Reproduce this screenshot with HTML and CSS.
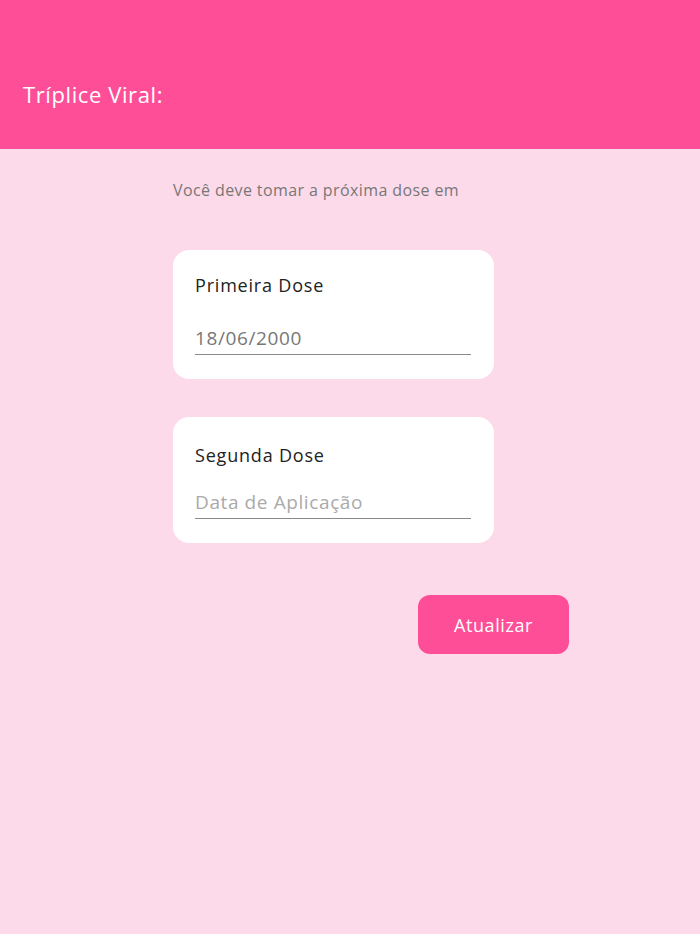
FILE: index.html
```html
<!DOCTYPE html>
<html>
	<head>
		<meta charset="utf-8">
		<title>Tríplice Viral</title>
		<link rel="stylesheet" href="styles.css">
	</head>
	<body>
		<header class="topo">
			<h1>Tríplice Viral:</h1>
		</header>
		<main class="conteudo">
			<p class="aviso">Você deve tomar a próxima dose em</p>
			<div class="cartao">
				<label for="dose1">Primeira Dose</label>
				<input id="dose1" type="text" value="18/06/2000">
			</div>
			<div class="cartao vazio">
				<label for="dose2">Segunda Dose</label>
				<input id="dose2" type="text" placeholder="Data de Aplicação">
			</div>
			<div class="acoes">
				<button class="btn">Atualizar</button>
			</div>
		</main>
	</body>
</html>
```

FILE: styles.css
```css
body, h1, p{
	margin: 0;
	padding: 0;
}
body{
	background: #fddaea;
	font-family: "Open Sans", "Liberation Sans", sans-serif;
	min-height: 934px;
}
.topo{
	height: 149px;
	background: #ff4e98;
	padding: 79px 23px 0;
	box-sizing: border-box;
}
.topo h1{
	font-size: 22px;
	line-height: 30px;
	letter-spacing: 0.6px;
	font-weight: normal;
	color: #fff;
}
.conteudo{
	width: 396px;
	margin-left: 173px;
	padding-top: 31px;
	display: flex;
	flex-direction: column;
}
.aviso{
	font-size: 16px;
	line-height: 20px;
	letter-spacing: 0.4px;
	color: #777;
	margin-bottom: 50px;
}
.cartao{
	width: 321px;
	box-sizing: border-box;
	background: #fff;
	border-radius: 16px;
	padding: 23px 23px 24px 22px;
	display: flex;
	flex-direction: column;
	margin-bottom: 38px;
}
.cartao label{
	font-size: 18px;
	line-height: 24px;
	letter-spacing: 0.8px;
	color: #222;
}
.cartao input{
	margin-top: 26px;
	height: 29px;
	padding: 0 0 2px;
	border: none;
	border-bottom: 1.5px solid #8a8a8a;
	outline: none;
	font-family: inherit;
	font-size: 19px;
	letter-spacing: 0.6px;
	color: #777;
	background: transparent;
}
.cartao input::placeholder{
	color: #aaa;
}
.vazio{
	padding-top: 26px;
}
.vazio input{
	margin-top: 20px;
}
.acoes{
	display: flex;
	justify-content: flex-end;
	margin-top: 14px;
}
.btn{
	width: 151px;
	height: 59px;
	border: none;
	border-radius: 12px;
	background: #ff4e98;
	color: #fff;
	font-family: inherit;
	font-size: 18px;
	letter-spacing: 0.6px;
}
```
